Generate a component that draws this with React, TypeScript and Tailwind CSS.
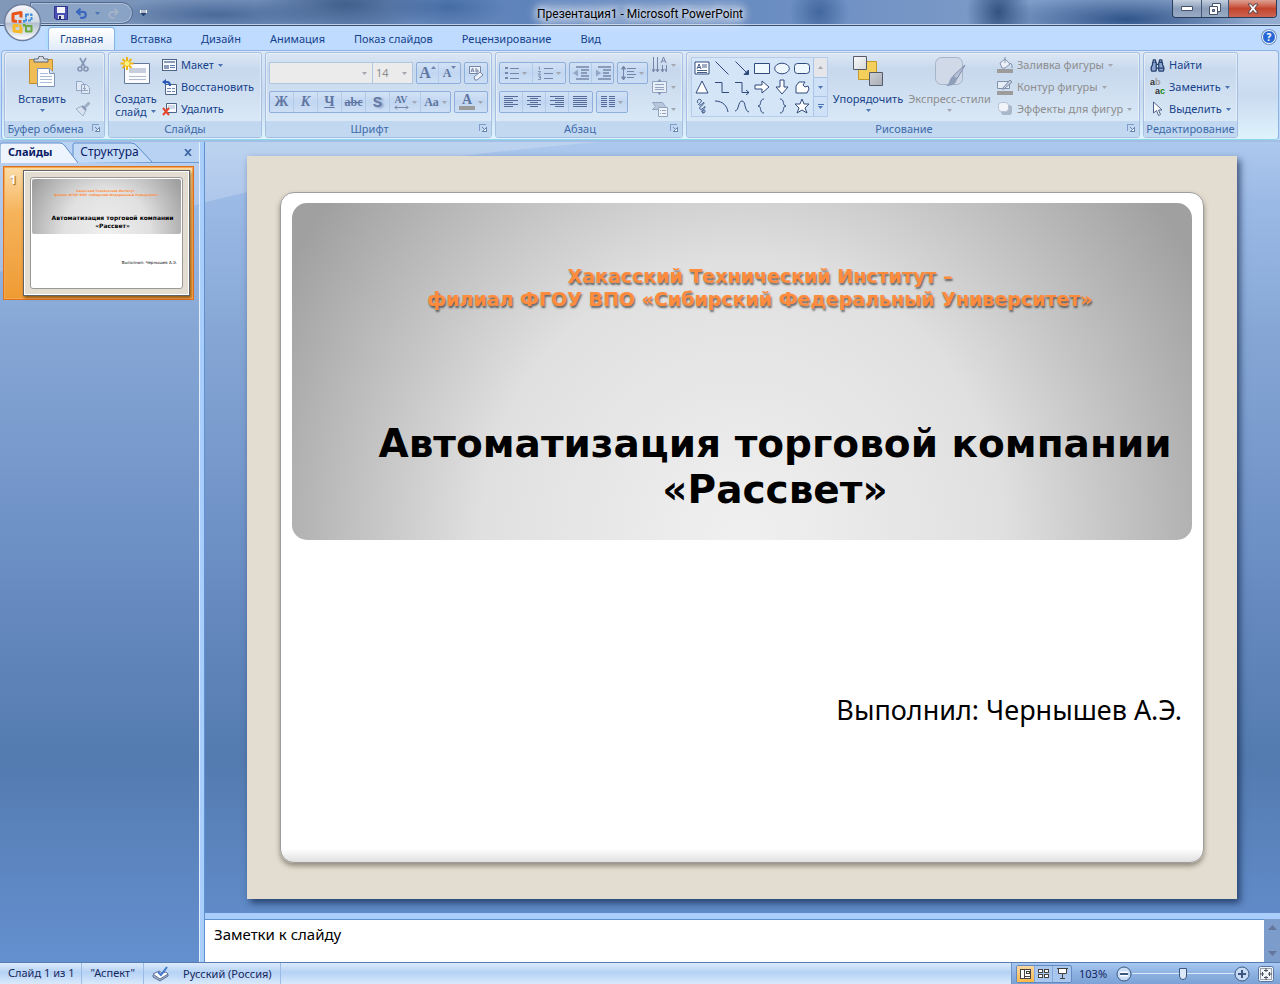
import type { ReactNode } from "react";
import { Undo2, Redo2, Binoculars } from "lucide-react";

const TABS = ["Главная", "Вставка", "Дизайн", "Анимация", "Показ слайдов", "Рецензирование", "Вид"];

const INK = "#2f4a7c";
const DIM = "#7686a8";

function Caret({ dim = false }: { dim?: boolean }) {
  return (
    <svg width="5" height="3" viewBox="0 0 5 3" className="shrink-0">
      <path d="M0 0h5L2.5 3z" fill={dim ? "#a3a8b0" : "#4a74b4"} />
    </svg>
  );
}

function Launcher() {
  return (
    <button aria-label="Параметры" className="absolute right-1 top-[3px]">
      <svg width="8" height="8" viewBox="0 0 8 8" shapeRendering="crispEdges">
        <path d="M0.5 6.5v-6h6" fill="none" stroke="#7d9cc8" />
        <path d="M3 3l3 3M7.5 3.5v4h-4z" fill="#fff" stroke="#6585b5" />
      </svg>
    </button>
  );
}

type GroupProps = { title: string; width: string; launcher?: boolean; children: ReactNode };

function Group({ title, width, launcher = false, children }: GroupProps) {
  return (
    <section
      className={`${width} flex h-[86px] shrink-0 flex-col overflow-hidden rounded-[3px] border border-[#a4bfdf] bg-linear-to-b from-[#dce7f4] from-0% via-[#c7d8ed] via-20% to-[#d9e8f6] to-80% shadow-[inset_0_0_0_1px_rgba(255,255,255,0.4)]`}
    >
      <div className="flex h-[68px] px-[3px] pt-px">{children}</div>
      <div className="relative flex h-4 items-center justify-center bg-[#c1d8f0] text-[11px] leading-4 text-[#3e6aaa]">
        <span className={launcher ? "pr-[18px] whitespace-nowrap" : "whitespace-nowrap"}>{title}</span>
        {launcher && <Launcher />}
      </div>
    </section>
  );
}

type RowProps = { icon: ReactNode; label: string; caret?: boolean; dim?: boolean };

function SmallButton({ icon, label, caret = false, dim = false }: RowProps) {
  return (
    <button
      className={`flex h-[22px] items-center gap-1 whitespace-nowrap text-[11px] leading-4 ${dim ? "text-[#8d8d8d]" : "text-[#15428b]"}`}
    >
      {icon}
      <span>{label}</span>
      {caret && <Caret dim={dim} />}
    </button>
  );
}

function Strip({ children }: { children: ReactNode }) {
  return (
    <div className="flex h-[22px] divide-x divide-[#b2cbeb] rounded-[2px] border border-[#8eaedb] bg-linear-to-b from-[#d3e2f5] via-[#c1d6f1] to-[#cddff5]">
      {children}
    </div>
  );
}

type StripButtonProps = { label: string; width: string; caret?: boolean; children: ReactNode };

function StripButton({ label, width, caret = false, children }: StripButtonProps) {
  return (
    <button
      aria-label={label}
      className={`${width} flex items-center justify-center gap-[3px] font-['Liberation_Serif',serif] text-[14px] leading-4 font-bold text-[#5f76a2]`}
    >
      {children}
      {caret && <Caret dim />}
    </button>
  );
}

function Lines({ rows }: { rows: [number, number][] }) {
  return (
    <svg width="15" height="13" viewBox="0 0 15 13" shapeRendering="crispEdges" stroke="#566b98">
      {rows.map(([x1, x2], i) => (
        <path key={i} d={`M${x1} ${i * 2 + 0.5}H${x2}`} />
      ))}
    </svg>
  );
}

const ALIGN: { label: string; rows: [number, number][] }[] = [
  { label: "По левому краю", rows: [[0, 14], [0, 9], [0, 14], [0, 9], [0, 14], [0, 9]] },
  { label: "По центру", rows: [[0, 14], [3, 11], [0, 14], [3, 11], [0, 14], [3, 11]] },
  { label: "По правому краю", rows: [[0, 14], [5, 14], [0, 14], [5, 14], [0, 14], [5, 14]] },
  { label: "По ширине", rows: [[0, 14], [0, 14], [0, 14], [0, 14], [0, 14], [0, 14]] },
];

const SHAPES: { label: string; art: ReactNode }[] = [
  {
    label: "Надпись",
    art: (
      <>
        <path d="M1 2h14v12H1z" fill="#fff" />
        <path d="M3 9l2-5 2 5M4 7.500h2M8 5h5M8 7h5M3 10.500h10M3 12.500h10" strokeWidth="0.900" />
      </>
    ),
  },
  { label: "Линия", art: <path d="M1.500 1.500l13 13" /> },
  { label: "Стрелка", art: <><path d="M1.500 1.500l12 12" /><path d="M14.500 10v4.500H10z" fill={INK} /></> },
  { label: "Прямоугольник", art: <path d="M.5 3.500h15v10H.5z" fill="#eef6fe" /> },
  { label: "Овал", art: <ellipse cx="8" cy="8.500" rx="7.300" ry="5.300" fill="#eef6fe" /> },
  { label: "Скругленный прямоугольник", art: <rect x=".5" y="3.500" width="15" height="10" rx="3" fill="#eef6fe" /> },
  { label: "Треугольник", art: <path d="M8 2l6 12H2z" fill="#fff" /> },
  { label: "Уступ", art: <path d="M1 3.500h7v10h7" /> },
  { label: "Уступ со стрелкой", art: <path d="M1 3.500h7v10h7M12 11l3 2.500-3 2.500" /> },
  { label: "Стрелка вправо", art: <path d="M1 6h7V2l7 6-7 6v-4H1z" fill="#fff" /> },
  { label: "Стрелка вниз", art: <path d="M6 1h4v7h4l-6 7-6-7h4z" fill="#fff" /> },
  { label: "Полилиния", art: <path d="M2 14V7l3-4h6l-2 3 2 2 3-1 1 3-2 4z" fill="#fff" /> },
  { label: "Рисованная кривая", art: <path d="M4 5c-2-2 1-5 3-3s-4 4-2 5 5-4 5-2-6 4-4 6 5-4 5-2-4 3-3 5 3 1 3-1-3-1-2 2" /> },
  { label: "Дуга", art: <path d="M1 3c8 0 12 5 13 11" /> },
  { label: "Кривая", art: <path d="M1 13C5 13 4 3 8 3s2 10 7 11" /> },
  { label: "Левая скобка", art: <path d="M10 1C5 1 8 8 4 8c4 0 1 7 6 7" /> },
  { label: "Правая скобка", art: <path d="M6 1c5 0 2 7 6 7-4 0-1 7-6 7" /> },
  { label: "Звезда", art: <path d="M8 1l2 5h5l-4 4 2 5-5-3-5 3 2-5-4-4h5z" fill="#fff" /> },
];

function OfficeOrb() {
  return (
    <button aria-label="Кнопка Office" className="absolute left-[3px] top-[3px] z-10">
      <svg width="39" height="39" viewBox="0 0 39 39">
        <defs>
          <linearGradient id="orb" x1="0" y1="0" x2="0" y2="1">
            <stop offset="0" stopColor="#f6f8fb" />
            <stop offset=".48" stopColor="#d3dae5" />
            <stop offset=".52" stopColor="#b3bfd0" />
            <stop offset="1" stopColor="#ffffff" />
          </linearGradient>
        </defs>
        <circle cx="19.500" cy="19.500" r="18" fill="url(#orb)" stroke="#6d7f9d" strokeWidth="1.500" />
        <g fill="none" strokeLinejoin="round">
          <path d="M18 14.500V9.500l-8 1.500v7l4 .5" stroke="#e8551b" strokeWidth="3" />
          <path d="M23 11.500h5.500v6h-5.500z" stroke="#3f8fdd" strokeWidth="2" strokeDasharray="3 1" />
          <path d="M18 24v5l-7-1v-5.500h4" stroke="#f5b92b" strokeWidth="3" />
          <path d="M23 23h5.500v5.500h-5.500z" stroke="#69a93d" strokeWidth="2" />
        </g>
        <path d="M15.500 17h3v3h-3z" fill="#e8551b" />
        <path d="M20 17h2.500v2.500h-2.500z" fill="#3f8fdd" />
        <path d="M15.500 21.500h3v2.500h-3z" fill="#f5b92b" />
        <path d="M20 21h2.500v2.500h-2.500z" fill="#69a93d" />
      </svg>
    </button>
  );
}

function TitleBar() {
  return (
    <header className="relative flex h-[26px] items-start border-b border-[#38506e] bg-linear-to-r from-[#8298b8] from-0% via-[#5b81bb] via-45% to-[#93acd0] to-100% shadow-[inset_0_-1px_0_#c0d0e6]">
      {/* glass blotches that show through the frame */}
      <div className="absolute inset-x-0 top-0 h-6 bg-[radial-gradient(ellipse_90px_30px_at_27%_20%,rgba(49,78,120,0.7),transparent),radial-gradient(ellipse_110px_16px_at_17%_60%,#4a6a99,transparent),radial-gradient(ellipse_60px_20px_at_35%_30%,#466ca5,transparent),radial-gradient(ellipse_30px_30px_at_64%_50%,#42679f,transparent),radial-gradient(ellipse_32px_40px_at_78%_50%,#34527f,transparent),radial-gradient(ellipse_130px_26px_at_88%_80%,#31558a,transparent)]" />
      <div className="relative ml-[30px] mt-[2px] flex h-[22px] w-[103px] items-center justify-end gap-[7px] rounded-r-full border border-[#50698f] bg-[#8fa7c9]/80 pr-3 shadow-[inset_0_0_0_1px_rgba(255,255,255,0.3)]">
        <button aria-label="Сохранить">
          <svg width="14" height="14" viewBox="0 0 14 14">
            <path d="M.5 .5h13v13H2l-1.500-1.500z" fill="#4b50b5" stroke="#30338b" />
            <path d="M3 1h8v6H3z" fill="#f3f5fa" />
            <path d="M4 9h6v4H4z" fill="#dde1ea" />
            <path d="M5 10h2v3H5z" fill="#23265c" />
          </svg>
        </button>
        <button aria-label="Отменить" className="flex items-center gap-[7px]">
          <Undo2 size={13} strokeWidth={4} color="#3b68bd" />
          <Caret />
        </button>
        <button aria-label="Вернуть">
          <Redo2 size={13} strokeWidth={3} color="#a5b3c8" />
        </button>
      </div>
      <button aria-label="Настройка панели" className="relative ml-[7px] mt-[10px]">
        <svg width="7" height="7" viewBox="0 0 7 7">
          <path d="M0 0h7v3h-7z" fill="#fff" />
          <path d="M1 1h5M1 3h5L3.500 6z" stroke="#24406d" fill="#24406d" strokeWidth=".7" />
        </svg>
      </button>
      <h1 className="absolute left-1/2 top-[5px] -translate-x-1/2 whitespace-nowrap rounded-full bg-white/25 font-['Roboto',sans-serif] text-[12px] leading-[18px] text-black shadow-[0_0_8px_4px_rgba(255,255,255,0.25)] [text-shadow:0_0_8px_white,0_0_6px_white]">
        Презентация1 - Microsoft PowerPoint
      </h1>
      <div className="relative ml-auto mr-[3px] flex h-[18px] overflow-hidden rounded-b-[4px] border border-t-0 border-[#283c59]">
        <button aria-label="Свернуть" className="flex w-[29px] items-center justify-center border-r border-[#405777] bg-linear-to-b from-[#c4cfde] via-[#8b9eb9] to-[#98aac4]">
          <svg width="12" height="5" viewBox="0 0 12 5"><path d="M.5 .5h11v4H.5z" fill="#fff" stroke="#45536a" /></svg>
        </button>
        <button aria-label="Восстановить окно" className="flex w-[27px] items-center justify-center border-r border-[#405777] bg-linear-to-b from-[#c4cfde] via-[#8b9eb9] to-[#98aac4]">
          <svg width="12" height="12" viewBox="0 0 12 12" stroke="#45536a" fill="#fff">
            <path d="M3.500 .5h8v8h-8z" />
            <path d="M.5 3.500h8v8h-8z" />
            <path d="M3.500 6.500h2v2h-2z" fill="#8194b0" />
          </svg>
        </button>
        <button aria-label="Закрыть" className="flex w-[47px] items-center justify-center bg-linear-to-b from-[#dca193] via-[#c3442c] to-[#cb6350]">
          <svg width="12" height="11" viewBox="0 0 12 11">
            <path d="M1 1h3l2 2.500L8 1h3L7.700 5.300 11 10H8L6 7.300 4 10H1l3.300-4.700z" fill="#fff" stroke="#4d3a45" strokeWidth=".9" />
          </svg>
        </button>
      </div>
    </header>
  );
}

function RibbonTabs() {
  return (
    <nav className="flex h-6 items-end bg-[#bfdbff] pl-12 pr-1">
      {TABS.map((tab, i) => (
        <button
          key={tab}
          className={
            i === 0
              ? "h-[23px] rounded-t-[4px] border border-b-0 border-[#8db2e3] bg-linear-to-b from-white to-[#e1ecf8] px-[11px] text-[11px] leading-4 text-[#15428b] shadow-[0_0_3px_#8ee4f5]"
              : "h-[23px] pr-[14px] pl-[15px] text-[11px] leading-4 text-[#15428b]"
          }
        >
          {tab}
        </button>
      ))}
      <button
        aria-label="Справка"
        className="mb-[6px] ml-auto flex size-[14px] items-center justify-center rounded-full border border-white bg-[#2767d5] text-[10px] leading-none font-bold text-white shadow-[0_0_0_1px_#7a97c6]"
      >
        ?
      </button>
    </nav>
  );
}

function ClipboardGroup() {
  return (
    <Group title="Буфер обмена" width="w-[101px]" launcher>
      <button className="ml-px flex w-[66px] flex-col items-center pt-[2px] text-[11px] leading-[14px] text-[#15428b]">
        <svg width="28" height="32" viewBox="0 0 28 32">
          <path d="M1.500 3.500h23v24h-23z" fill="#f0bd55" stroke="#c18b31" />
          <path d="M6 6V3h4a3 3 0 0 1 6 0h4v3z" fill="#d6dae1" stroke="#5d6470" />
          <path d="M9.500 12.500h12l5 5v13h-17z" fill="#fbfdff" stroke="#7c92b7" />
          <path d="M12 17.500h8M12 20.500h12M12 23.500h12M12 26.500h12" stroke="#a8bbd8" />
          <path d="M21.500 12.500v5h5" fill="#d4e0f0" stroke="#7c92b7" />
        </svg>
        <span className="mt-[4px] mb-[3px]">Вставить</span>
        <Caret />
      </button>
      <div className="flex w-4 flex-col items-center gap-[6px] pt-[3px]">
        <button aria-label="Вырезать">
          <svg width="16" height="16" viewBox="0 0 16 16" fill="none" stroke="#8496b5" strokeWidth="1.600">
            <path d="M5 1l5 9M11 1L6 10" />
            <circle cx="5" cy="12" r="2" />
            <circle cx="11" cy="12" r="2" />
          </svg>
        </button>
        <button aria-label="Копировать">
          <svg width="16" height="16" viewBox="0 0 16 16" fill="#dfe8f4" stroke="#93a5c2">
            <path d="M1.500 2.500h5l3 3v6h-8zM6.500 5.500h5l3 3v6h-8z" />
            <path d="M8 9.500h3M8 11.500h5" />
          </svg>
        </button>
        <button aria-label="Формат по образцу">
          <svg width="16" height="16" viewBox="0 0 16 16" fill="#d9e2ee" stroke="#9fb0c9">
            <path d="M14.500 1.500l-5 5" strokeWidth="3" />
            <path d="M1 8l6-3 4 4-3 6z" />
            <path d="M7 5l4 4" stroke="#8496b5" strokeWidth="2" />
          </svg>
        </button>
      </div>
    </Group>
  );
}

function SlidesGroup() {
  return (
    <Group title="Слайды" width="w-[154px]">
      <button className="flex w-[47px] flex-col items-center pt-[2px] text-[11px] leading-[13px] text-[#15428b]">
        <svg width="32" height="32" viewBox="0 0 32 32">
          <path d="M4.500 7.500h25v20h-25z" fill="#f9fbfe" stroke="#64789b" />
          <path d="M9 12h17v5H9z" fill="#c7cfdc" />
          <path d="M9 20.500h17M9 23.500h17" stroke="#b1bccd" />
          <path d="M7 1v13M.5 7.500h13M2.500 3l9 9M11.500 3l-9 9" stroke="#f1b514" strokeWidth="2" />
          <circle cx="7" cy="7.500" r="2.500" fill="#fff27a" />
        </svg>
        <span className="mt-[4px]">Создать</span>
        <span className="flex items-center gap-1">слайд <Caret /></span>
      </button>
      <div className="ml-[3px] flex flex-col">
        <SmallButton
          label="Макет"
          caret
          icon={
            <svg width="15" height="14" viewBox="0 0 15 14" shapeRendering="crispEdges">
              <path d="M.5 1.500h14v11H.5z" fill="#f6f9fd" stroke="#4f6387" />
              <path d="M2 3h11v2H2zM2 7h5v4H2z" fill="#8b9cbb" />
              <path d="M8 7.500h5M8 9.500h5" stroke="#5a76ab" />
            </svg>
          }
        />
        <SmallButton
          label="Восстановить"
          icon={
            <svg width="15" height="16" viewBox="0 0 15 16">
              <path d="M3.500 5.500h11v10h-11z" fill="#f6f9fd" stroke="#4f6387" />
              <path d="M5 9.500h4M5 12.500h4M10 9.500h3M10 12.500h3" stroke="#6f86b0" />
              <path d="M2 3h3q3 0 3 4" fill="none" stroke="#2859b8" strokeWidth="2" />
              <path d="M4 0v6L0 3z" fill="#2859b8" />
            </svg>
          }
        />
        <SmallButton
          label="Удалить"
          icon={
            <svg width="15" height="14" viewBox="0 0 15 14">
              <path d="M4.500 1.500h10v9h-10z" fill="#f6f9fd" stroke="#4f6387" />
              <path d="M6 3h7v4H6z" fill="#cdd7e6" />
              <path d="M1 6l6 7M7 6l-6 7" stroke="#e5452a" strokeWidth="2" />
            </svg>
          }
        />
      </div>
    </Group>
  );
}

function FontGroup() {
  return (
    <Group title="Шрифт" width="w-[227px]" launcher>
      <div className="flex flex-col gap-[7px] pt-2">
        <div className="flex gap-[3px]">
          <div className="flex">
            <div className="relative flex">
              <select aria-label="Шрифт" className="h-[22px] w-[104px] appearance-none border border-[#b1c6e0] bg-[#ebebec] text-[11px]" />
              <span className="pointer-events-none absolute right-[6px] top-0 flex h-[22px] items-center"><Caret dim /></span>
            </div>
            <div className="relative flex">
              <select aria-label="Размер шрифта" className="h-[22px] w-10 appearance-none border border-l-0 border-[#b1c6e0] bg-[#ebebec] pl-[3px] text-[11px] text-[#8d8d8d]">
                <option>14</option>
              </select>
              <span className="pointer-events-none absolute right-[6px] top-0 flex h-[22px] items-center"><Caret dim /></span>
            </div>
          </div>
          <Strip>
            <StripButton label="Увеличить размер" width="w-[22px]"><span className="text-[16px]">A</span><svg width="5" height="14" viewBox="0 0 5 14" className="-ml-[3px]"><path d="M0 3h5L2.500 0z" fill="#6c84ae" /></svg></StripButton>
            <StripButton label="Уменьшить размер" width="w-[21px]"><span className="text-[12px]">A</span><svg width="5" height="14" viewBox="0 0 5 14" className="-ml-[3px]"><path d="M0 0h5L2.500 3z" fill="#6c84ae" /></svg></StripButton>
          </Strip>
          <Strip>
            <StripButton label="Очистить формат" width="w-[22px]">
              <svg width="16" height="16" viewBox="0 0 16 16" fill="#eef3fa" stroke={DIM}>
                <path d="M1.500 1.500h11v7h-11z" />
                <path d="M3 7l1.500-4L6 7M3.500 6h2M8 3v4h2V5H8" fill="none" />
                <path d="M6 12l6-5 3 3-6 5H7z" />
              </svg>
            </StripButton>
          </Strip>
        </div>
        <div className="flex gap-[3px]">
          <Strip>
            <StripButton label="Полужирный" width="w-6">Ж</StripButton>
            <StripButton label="Курсив" width="w-6"><i>К</i></StripButton>
            <StripButton label="Подчеркнутый" width="w-6"><u>Ч</u></StripButton>
            <StripButton label="Зачеркнутый" width="w-6"><s className="text-[12px]">abc</s></StripButton>
            <StripButton label="Тень" width="w-6"><span className="font-['Liberation_Sans',sans-serif] [text-shadow:2px_1px_2px_#8fa0c0]">S</span></StripButton>
            <StripButton label="Интервал" width="w-[31px]" caret>
              <span className="flex flex-col items-center text-[10px] leading-[10px]">
                AV
                <svg width="15" height="5" viewBox="0 0 15 5"><path d="M1 2.500h13M3 .5l-2 2 2 2M12 .5l2 2-2 2" fill="none" stroke={DIM} /></svg>
              </span>
            </StripButton>
            <StripButton label="Регистр" width="w-[29px]" caret><span className="text-[12px]">Aa</span></StripButton>
          </Strip>
          <Strip>
            <StripButton label="Цвет текста" width="w-[32px]" caret>
              <span className="border-b-4 border-[#9a9a9a] px-[3px] text-[14px] leading-3">A</span>
            </StripButton>
          </Strip>
        </div>
      </div>
    </Group>
  );
}

function ParagraphGroup() {
  return (
    <Group title="Абзац" width="w-[188px]" launcher>
      <div className="flex flex-col gap-[7px] pt-2">
        <div className="flex gap-[3px]">
          <Strip>
            <StripButton label="Маркеры" width="w-[33px]" caret>
              <svg width="14" height="14" viewBox="0 0 14 14" stroke={DIM} shapeRendering="crispEdges">
                <path d="M5 2.500h9M5 7.500h9M5 12.500h9" />
                <path d="M0 2h3M0 7h3M0 12h3" strokeWidth="2" />
              </svg>
            </StripButton>
            <StripButton label="Нумерация" width="w-[32px]" caret>
              <svg width="15" height="14" viewBox="0 0 15 14" stroke={DIM} fill="none">
                <path d="M6 2.500h9M6 7.500h9M6 12.500h9" />
                <path d="M.5 1h1v3M0 5.500h2.500L.5 8.500H3M0 10h2.500v3.500H0M1 11.500h1" strokeWidth=".8" />
              </svg>
            </StripButton>
          </Strip>
          <Strip>
            <StripButton label="Уменьшить отступ" width="w-[22px]">
              <svg width="16" height="14" viewBox="0 0 16 14" stroke={DIM}>
                <path d="M3 1h13M8 4h8M8 10h8M3 13h13M8 7h6" strokeWidth="1.500" />
                <path d="M5 3.500v7L0 7z" fill="#93a6c5" stroke="none" />
              </svg>
            </StripButton>
            <StripButton label="Увеличить отступ" width="w-[21px]">
              <svg width="16" height="14" viewBox="0 0 16 14" stroke={DIM}>
                <path d="M3 1h13M8 4h8M8 10h8M3 13h13M8 7h6" strokeWidth="1.500" />
                <path d="M1 3.500v7L6 7z" fill="#93a6c5" stroke="none" />
              </svg>
            </StripButton>
          </Strip>
          <Strip>
            <StripButton label="Междустрочный интервал" width="w-[29px]" caret>
              <svg width="15" height="16" viewBox="0 0 15 16" stroke={DIM} fill={DIM}>
                <path d="M6 3.500h9M6 6.500h7M6 9.500h9M6 12.500h7" />
                <path d="M2.500 2v12M.5 4l2-3 2 3zM.5 12l2 3 2-3z" />
              </svg>
            </StripButton>
          </Strip>
        </div>
        <div className="flex gap-[3px]">
          <Strip>
            {ALIGN.map((a) => (
              <StripButton key={a.label} label={a.label} width="w-[23px]"><Lines rows={a.rows} /></StripButton>
            ))}
          </Strip>
          <Strip>
            <StripButton label="Колонки" width="w-[30px]" caret>
              <svg width="14" height="12" viewBox="0 0 14 12" stroke="#566b98" shapeRendering="crispEdges">
                <path d="M0 .5h6M8 .5h6M0 2.500h6M8 2.500h6M0 4.500h6M8 4.500h6M0 6.500h6M8 6.500h6M0 8.500h6M8 8.500h6M0 10.500h6M8 10.500h6" />
              </svg>
            </StripButton>
          </Strip>
        </div>
      </div>
      <div className="ml-1 flex flex-col">
        <button aria-label="Направление текста" className="flex h-[22px] items-center gap-[3px]">
          <svg width="16" height="16" viewBox="0 0 16 16" stroke={DIM} fill="none">
            <path d="M1.500 0v14M5.500 0v14M10.500 8v6M14.500 8v6M9 6l2.500-6L14 6M10 4h3M0 12l1.500 3L3 12M4 12l1.500 3L7 12M9 12l1.500 3 1.500-3M13 12l1.500 3" />
          </svg>
          <Caret dim />
        </button>
        <button aria-label="Выровнять текст" className="flex h-[22px] items-center gap-[3px]">
          <svg width="16" height="16" viewBox="0 0 16 16" stroke="#93a4c1" fill="#e7eef8">
            <path d="M.5 2.500h14v11H.5zM3 5.500h9M3 8.500h9M3 10.500h9" />
            <path d="M5 3l2.500-3L10 3zM5 13l2.500 3 2.500-3z" fill="#8294b3" stroke="none" />
          </svg>
          <Caret dim />
        </button>
        <button aria-label="Преобразовать в SmartArt" className="flex h-[22px] items-center gap-[3px]">
          <svg width="16" height="16" viewBox="0 0 16 16" stroke="#93a4c1" fill="#b8c6db">
            <path d="M.5 1.500h10l3 4-3 3H.5l3-3z" />
            <path d="M6.500 6.500h9v9h-9z" fill="#eef3fa" />
            <path d="M8 9.500h1M10 9.500h4M8 12.500h1M10 12.500h4" />
          </svg>
          <Caret dim />
        </button>
      </div>
    </Group>
  );
}

function DrawingGroup() {
  return (
    <Group title="Рисование" width="w-[454px]" launcher>
      <div className="ml-px mt-[3px] flex h-[60px] shrink-0 border border-[#b5cdea] bg-[#d4e5f8]">
        <div className="grid grid-cols-6">
          {SHAPES.map((s) => (
            <button key={s.label} aria-label={s.label} className="flex h-[19px] w-5 items-center justify-center">
              <svg width="16" height="16" viewBox="0 0 16 16" fill="none" stroke={INK}>
                {s.art}
              </svg>
            </button>
          ))}
        </div>
        <div className="ml-px flex w-[14px] flex-col divide-y divide-[#a9c4e6] border-l border-[#a9c4e6]">
          <button aria-label="Вверх" className="flex flex-1 items-center justify-center bg-[#e4e6ea]"><span className="rotate-180"><Caret dim /></span></button>
          <button aria-label="Вниз" className="flex flex-1 items-center justify-center bg-[#cfe1f7]"><Caret /></button>
          <button aria-label="Еще" className="flex flex-1 flex-col items-center justify-center gap-px bg-[#cfe1f7]"><i className="h-px w-[6px] bg-[#4a74b4]" /><Caret /></button>
        </div>
      </div>
      <button className="ml-[2px] flex w-[76px] shrink-0 flex-col items-center pt-[2px] text-[11px] leading-[14px] text-[#15428b]">
        <svg width="32" height="32" viewBox="0 0 32 32">
          <defs>
            <linearGradient id="tile" x1="0" y1="0" x2="1" y2="1">
              <stop offset="0" stopColor="#fafafa" />
              <stop offset="1" stopColor="#a9adb5" />
            </linearGradient>
          </defs>
          <path d="M6.500 5.500h18v18h-18z" fill="#f5cf5c" stroke="#c59a2b" />
          <path d="M1.500 .5h13v13h-13zM17.500 16.500h13v13h-13z" fill="url(#tile)" stroke="#555b66" />
        </svg>
        <span className="mt-[4px] mb-[3px]">Упорядочить</span>
        <Caret />
      </button>
      <button className="flex w-[87px] shrink-0 flex-col items-center pt-[2px] text-[11px] leading-[14px] text-[#8d8d8d]">
        <svg width="32" height="32" viewBox="0 0 32 32">
          <rect x="1.500" y="1.500" width="27" height="27" rx="6" fill="#cfd9e8" stroke="#a7b3c6" />
          <path d="M31 9l-8 14-4-3z" fill="#b6c2d5" stroke="#7f8fab" />
          <path d="M19 20l4 3c-1 6-6 7-11 7 4-2 3-8 7-10z" fill="#8f9fb9" />
        </svg>
        <span className="mt-[4px] mb-[3px] whitespace-nowrap">Экспресс-стили</span>
        <Caret dim />
      </button>
      <div className="ml-1 flex flex-col">
        <SmallButton
          label="Заливка фигуры"
          caret
          dim
          icon={
            <svg width="16" height="16" viewBox="0 0 16 16">
              <path d="M3 6l5-4 5 5-5 4H5z" fill="#edf1f7" stroke="#8292ad" />
              <path d="M8 6V0M13 6q3 1 2 5" fill="none" stroke="#8292ad" />
              <path d="M0 12h16v4H0z" fill="#9c9c9c" />
            </svg>
          }
        />
        <SmallButton
          label="Контур фигуры"
          caret
          dim
          icon={
            <svg width="16" height="16" viewBox="0 0 16 16">
              <path d="M.5 2.500h12v7H.5z" fill="#e6edf6" stroke="#8292ad" />
              <path d="M5 10l8-9 2 2-8 7z" fill="#c6d1e1" stroke="#7889a5" />
              <path d="M0 12h16v4H0z" fill="#9c9c9c" />
            </svg>
          }
        />
        <SmallButton
          label="Эффекты для фигур"
          caret
          dim
          icon={
            <svg width="16" height="16" viewBox="0 0 16 16">
              <rect x="4" y="4" width="11" height="10" rx="3" fill="#aab7cb" />
              <rect x="1.500" y="1.500" width="10" height="9" rx="3" fill="#f1f4f9" stroke="#b6c1d3" />
            </svg>
          }
        />
      </div>
    </Group>
  );
}

function EditingGroup() {
  return (
    <Group title="Редактирование" width="w-[95px]">
      <div className="ml-[3px] flex flex-col">
        <SmallButton label="Найти" icon={<Binoculars size={15} color="#24406d" fill="#8ca6cf" />} />
        <SmallButton
          label="Заменить"
          caret
          icon={
            <span className="flex w-[15px] flex-col font-['Liberation_Sans',sans-serif] text-[9px] leading-[9px] font-bold">
              <span className="text-left text-[#333]">a<span className="text-[#999]">b</span></span>
              <span className="text-right text-[#333]">a<span className="text-[#178a17]">c</span></span>
            </span>
          }
        />
        <SmallButton
          label="Выделить"
          caret
          icon={
            <svg width="15" height="16" viewBox="0 0 15 16">
              <path d="M3.500 1v11l3-2.500 2 5 2-1-2-4.500H12z" fill="#fff" stroke="#4d6288" />
            </svg>
          }
        />
      </div>
    </Group>
  );
}

function SlidePanel() {
  return (
    <aside className="relative flex w-[199px] shrink-0 flex-col">
      <div className="relative flex h-[21px] items-stretch border-b border-[#6d9bd3] bg-[#b8d2f3] text-[12px] leading-5 text-[#0a1a66]">
        <svg className="absolute left-0 top-0" width="160" height="21" viewBox="0 0 160 21">
          <path d="M76 21c-3-2-3-5-3-9V3q0-2 2-2h56q4 0 6 3l15 16" fill="#c4dbf7" stroke="#5d8dca" />
          <path d="M0 21V3q0-2 2-2h58q3 0 5 3l13 17" fill="#edf4fd" stroke="#5d8dca" />
        </svg>
        <button className="relative pl-2 text-[11px] font-bold">Слайды</button>
        <button className="relative ml-7">Структура</button>
        <button aria-label="Закрыть панель" className="ml-auto mr-[7px] flex items-center">
          <svg width="8" height="7" viewBox="0 0 8 7"><path d="M1 0l6 7M7 0L1 7" stroke="#3f69a4" strokeWidth="1.800" /></svg>
        </button>
      </div>
      <button className="ml-[3px] mt-[3px] mr-[5px] flex items-start border border-[#e0701c] bg-linear-to-b from-[#fbdca6] from-0% via-[#f5b35a] via-34% to-[#ef9b33] to-100% p-[3px] shadow-[inset_0_0_0_1px_#f5a94f]">
        <span className="w-4 pt-[2px] pr-1 text-[12px] leading-4 font-bold text-white [text-shadow:1px_1px_1px_#8b5a1c]">1</span>
        <span className="block aspect-[167/126] flex-1 border border-[#5e6368] bg-[#e3dcd0] p-[6px] shadow-[1px_2px_3px_rgba(80,40,0,0.6),inset_0_0_0_1px_white]">
          <span className="flex h-full flex-col rounded-[3px] border border-[#999] bg-white p-px font-['DejaVu_Sans',sans-serif]">
            <span className="flex h-[55px] flex-col items-center rounded-[2px] bg-[radial-gradient(ellipse_58%_165%_at_50%_100%,#f0f0f0_0%,#e0e0e0_50%,#a0a0a0_100%)] pt-[10px] font-bold">
              <span className="text-[3px] leading-1 text-[#ff8b3d]">Хакасский Технический Институт –</span>
              <span className="text-[3px] leading-1 text-[#ff8b3d]">филиал ФГОУ ВПО «Сибирский Федеральный Университет»</span>
              <span className="pl-3 pt-[17px] text-center text-[6px] leading-2 whitespace-nowrap text-black">
                Автоматизация торговой компании<br />«Рассвет»
              </span>
            </span>
            <span className="pr-1 pt-[25px] text-right text-[4px] leading-2 font-normal text-black">Выполнил: Чернышев А.Э.</span>
          </span>
        </span>
      </button>
    </aside>
  );
}

function Slide() {
  return (
    <article className="relative flex aspect-[990/743] w-full flex-col bg-[#e3dcd0] px-[33px] py-9 font-['DejaVu_Sans',sans-serif] shadow-[3px_4px_7px_rgba(20,40,80,0.75)]">
      <div className="flex flex-1 flex-col rounded-[14px] border border-[#9d9d9d] bg-linear-to-b from-white from-98% to-[#e0e0e0] to-100% px-[11px] pt-[10px] shadow-[0_3px_5px_rgba(90,85,70,0.6)]">
        <div className="flex aspect-[900/337] flex-col rounded-[15px] bg-[radial-gradient(ellipse_58%_165%_at_50%_100%,#f0f0f0_0%,#e0e0e0_50%,#a0a0a0_100%)] pt-[62px] text-center">
          <p className="pl-9 text-[19px] leading-[23px] font-bold text-[#ff8b3d] [text-shadow:1px_2px_2px_rgba(0,0,0,0.55)]">
            Хакасский Технический Институт –<br />
            филиал ФГОУ ВПО «Сибирский Федеральный Университет»
          </p>
          <h2 className="pl-[66px] pt-[110px] text-[39px] leading-[46px] font-bold whitespace-nowrap text-black">
            Автоматизация торговой компании
            <br />
            «Рассвет»
          </h2>
        </div>
        <p className="pr-[10px] pt-[152px] text-right font-['Noto_Sans',sans-serif] text-[27px] leading-9 text-black">Выполнил: Чернышев А.Э.</p>
      </div>
    </article>
  );
}

function StatusBar() {
  return (
    <footer className="flex h-[22px] shrink-0 items-stretch border-t border-[#567db1] bg-linear-to-b from-[#dceafb] from-0% via-[#b5d2f5] via-45% to-[#d9e9fb] to-100% text-[11px] leading-5 text-[#15275f]">
      <span className="border-r border-[#9cbce6] pl-2 pr-[7px]">Слайд 1 из 1</span>
      <span className="border-r border-[#9cbce6] px-2">"Аспект"</span>
      <button className="flex items-center gap-[14px] border-r border-[#9cbce6] px-2">
        <svg width="17" height="16" viewBox="0 0 17 16">
          <path d="M1 9v2l7 4 8-5V8" fill="#9fb1d0" stroke="#5f7296" />
          <path d="M1 8l6-3 3 2 4-1 2 2-8 5z" fill="#fff" stroke="#5f7296" />
          <path d="M6 6l3 3 6-8" fill="none" stroke="#4377cc" strokeWidth="2" />
        </svg>
        <span>Русский (Россия)</span>
      </button>
      <div className="ml-auto flex items-center border-l border-[#6d93c9] bg-linear-to-b from-[#a9c9f2] via-[#8db1e1] to-[#7ba1d6] pl-1 pr-[6px]">
        <div className="flex h-[18px] divide-x divide-[#86a9da] rounded-[2px] border border-[#6489bf] bg-[#a9c7ee]">
          <button aria-label="Обычный" className="flex w-[18px] items-center justify-center bg-linear-to-b from-[#f8d6a0] to-[#fbb843]">
            <svg width="11" height="10" viewBox="0 0 11 10" shapeRendering="crispEdges"><path d="M.5 .5h10v9H.5zM4.500 .5v9M6 2.500h3v2H6zM5 7.500h5" fill="#fff" stroke="#45413c" /></svg>
          </button>
          <button aria-label="Сортировщик слайдов" className="flex w-[18px] items-center justify-center">
            <svg width="11" height="10" viewBox="0 0 11 10" shapeRendering="crispEdges"><path d="M.5 .5h4v3h-4zM6.500 .5h4v3h-4zM.5 5.500h4v3h-4zM6.500 5.500h4v3h-4z" fill="#fff" stroke="#45413c" /></svg>
          </button>
          <button aria-label="Показ слайдов" className="flex w-[18px] items-center justify-center">
            <svg width="11" height="11" viewBox="0 0 11 11"><path d="M0 .5h11M1.500 .5v5h8v-5" fill="#fff" stroke="#45413c" /><path d="M5.500 6v4M3 10.500h5" stroke="#45413c" /></svg>
          </button>
        </div>
        <span className="ml-[7px] w-[29px] whitespace-nowrap">103%</span>
        <button aria-label="Уменьшить" className="ml-2">
          <svg width="16" height="16" viewBox="0 0 16 16"><circle cx="8" cy="8" r="7" fill="#c9dcf5" stroke="#3c587f" /><path d="M4 8h8" stroke="#fff" strokeWidth="5" /><path d="M4 8h8" stroke="#3c587f" strokeWidth="2" /></svg>
        </button>
        <input
          type="range"
          aria-label="Масштаб"
          min={0}
          max={100}
          defaultValue={50}
          className="h-4 w-[102px] appearance-none bg-[linear-gradient(#dbe8f9,#dbe8f9)] bg-[length:100%_1px] bg-center bg-no-repeat [&::-webkit-slider-thumb]:h-3 [&::-webkit-slider-thumb]:w-2 [&::-webkit-slider-thumb]:appearance-none [&::-webkit-slider-thumb]:rounded-b-[4px] [&::-webkit-slider-thumb]:border [&::-webkit-slider-thumb]:border-[#3c587f] [&::-webkit-slider-thumb]:bg-[#dce8f8]"
        />
        <button aria-label="Увеличить">
          <svg width="16" height="16" viewBox="0 0 16 16"><circle cx="8" cy="8" r="7" fill="#c9dcf5" stroke="#3c587f" /><path d="M4 8h8M8 4v8" stroke="#3c587f" strokeWidth="2" /></svg>
        </button>
        <button aria-label="Вписать слайд" className="ml-2">
          <svg width="16" height="16" viewBox="0 0 16 16">
            <rect x=".5" y=".5" width="15" height="15" rx="2" fill="#f0f5fc" stroke="#58759f" />
            <path d="M2.500 2.500h11v11h-11z" fill="none" stroke="#4a4f58" strokeDasharray="1 1" />
            <path d="M8 2v4M6 4.500h4M8 10v4M6 11.500h4M2 8h4M4.500 6v4M10 8h4M11.500 6v4" stroke="#4a4f58" />
          </svg>
        </button>
      </div>
    </footer>
  );
}

export default function App() {
  return (
    <div className="relative flex min-h-screen flex-col bg-[#bfdbff] font-['Noto_Sans',sans-serif]">
      <OfficeOrb />
      <TitleBar />
      <RibbonTabs />
      <div className="mx-px flex gap-[3px] overflow-hidden rounded-[4px] border border-[#8db2e3] border-b-[#8ed6ee] bg-linear-to-b from-[#dce8f6] via-[#c9daf0] to-[#dff3fd] py-px pl-[2px]">
        <ClipboardGroup />
        <SlidesGroup />
        <FontGroup />
        <ParagraphGroup />
        <DrawingGroup />
        <EditingGroup />
      </div>
      <div className="relative flex flex-1 border-t-2 border-[#a3bfe3] bg-[linear-gradient(#acc8ed_0%,#9cbae6_7%,#86a7d5_23%,#6a8dc3_52%,#547bb0_75%,#6490cf_100%)]">
        {/* light swoosh across the top of the workspace */}
        <svg className="absolute inset-x-0 top-0 h-[130px] w-full" viewBox="0 0 1280 130" preserveAspectRatio="none">
          <path d="M0 130C160 65 300 25 600 0H0z" fill="#fff" fillOpacity=".2" />
        </svg>
        <SlidePanel />
        <div className="relative w-[6px] shrink-0 border-x border-l-[#e2effd] border-r-[#5f91d0] bg-[#a9cefb]" />
        <div className="flex min-w-0 flex-1 flex-col">
          <main className="flex-1 pt-[14px] pr-[43px] pb-[14px] pl-[42px]">
            <Slide />
          </main>
          <div className="flex shrink-0 border-t-[6px] border-[#a9cefb]">
            <textarea
              aria-label="Заметки к слайду"
              defaultValue="Заметки к слайду"
              className="h-[43px] flex-1 resize-none border-t border-[#5f91d0] bg-white px-[9px] pt-[3px] text-[15px] leading-[22px] text-black outline-none"
            />
            <div className="flex w-4 flex-col items-center justify-between bg-[#7c9dcb] py-[6px]">
              <svg width="9" height="5" viewBox="0 0 9 5"><path d="M0 5h9L4.500 0z" fill="#66759a" /></svg>
              <svg width="9" height="5" viewBox="0 0 9 5"><path d="M0 0h9L4.500 5z" fill="#66759a" /></svg>
            </div>
          </div>
        </div>
      </div>
      <StatusBar />
    </div>
  );
}
